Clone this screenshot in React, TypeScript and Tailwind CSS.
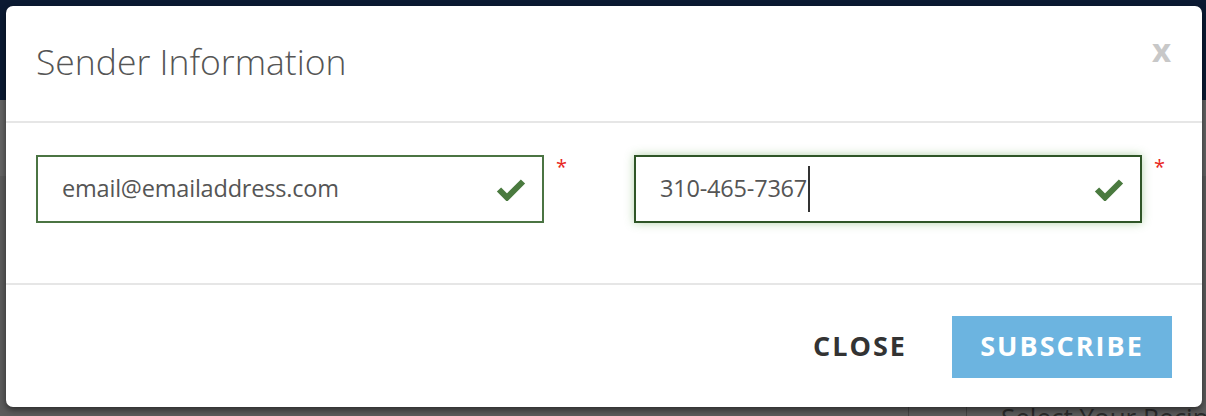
import React from 'react';

const font = { fontFamily: '"Open Sans", "Noto Sans", sans-serif' };

function Check() {
  return (
    <svg width="30" height="24" viewBox="0 0 30 24" className="text-[#4a7a3f]">
      <path d="M3 12.5 L11 20.5 L27 4.5" fill="none" stroke="currentColor" strokeWidth="6" strokeLinejoin="miter" />
    </svg>
  );
}

function Field({ value, focused }: { value: string; focused?: boolean }) {
  return (
    <div className="flex w-[538px] items-start gap-[12px]">
      <div
        className={`flex h-[68px] w-[508px] items-center justify-between border-2 bg-white pl-[24px] pr-[16px] ${
          focused
            ? 'border-[#2f5527] shadow-[0_0_9px_rgba(90,160,70,0.45)]'
            : 'border-[#4b7443]'
        }`}
      >
        <span className="flex items-center text-[23.5px] tracking-[-0.2px] text-[#555]">
          {value}
          {focused && <span className="ml-[1px] inline-block h-[46px] w-[2px] bg-[#333]" />}
        </span>
        <Check />
      </div>
      <span className="mt-[2px] text-[20px] leading-none text-[#e8261c]">*</span>
    </div>
  );
}

export default function App() {
  return (
    <div className="relative h-[416px] w-[1206px] overflow-hidden bg-[#5b5b5b]" style={font}>
      {/* page behind the overlay */}
      <div className="h-[100px] bg-[#0b1a32]" />
      <div className="h-[76px] bg-[#636363]" />
      <div className="flex h-[240px] justify-end">
        <div className="w-[58px] border-l border-[#444]" />
        <div className="w-[240px] whitespace-nowrap border-l border-[#444] pl-[34px] pt-[228px] text-[26px] leading-none text-[#2a2a2a]">
          Select Your Recipients
        </div>
      </div>

      {/* modal */}
      <div className="absolute left-[6px] top-[6px] flex h-[401px] w-[1196px] flex-col rounded-[7px] bg-white shadow-[0_3px_6px_rgba(0,0,0,0.5)]">
        <div className="flex h-[117px] shrink-0 items-start justify-between border-b-2 border-[#e6e6e6] pl-[30px] pr-[31px]">
          <h2 className="pt-[32px] text-[35.5px] font-light leading-[46px] text-[#555]">Sender Information</h2>
          <button className="pt-[27px] text-[33px] font-bold leading-none text-[#c8c8c8]">x</button>
        </div>
        <div className="flex h-[162px] shrink-0 gap-[60px] border-b-2 border-[#e6e6e6] pl-[30px] pt-[32px]">
          <Field value="email@emailaddress.com" />
          <Field value="310-465-7367" focused />
        </div>
        <div className="flex flex-1 items-center justify-end gap-[45px] pr-[30px] pt-[1px]">
          <button className="text-[27px] font-bold tracking-[2px] text-[#333]">CLOSE</button>
          <button className="h-[62px] w-[220px] bg-[#6cb4e0] text-[27px] font-bold tracking-[2px] text-white">
            SUBSCRIBE
          </button>
        </div>
      </div>
    </div>
  );
}
